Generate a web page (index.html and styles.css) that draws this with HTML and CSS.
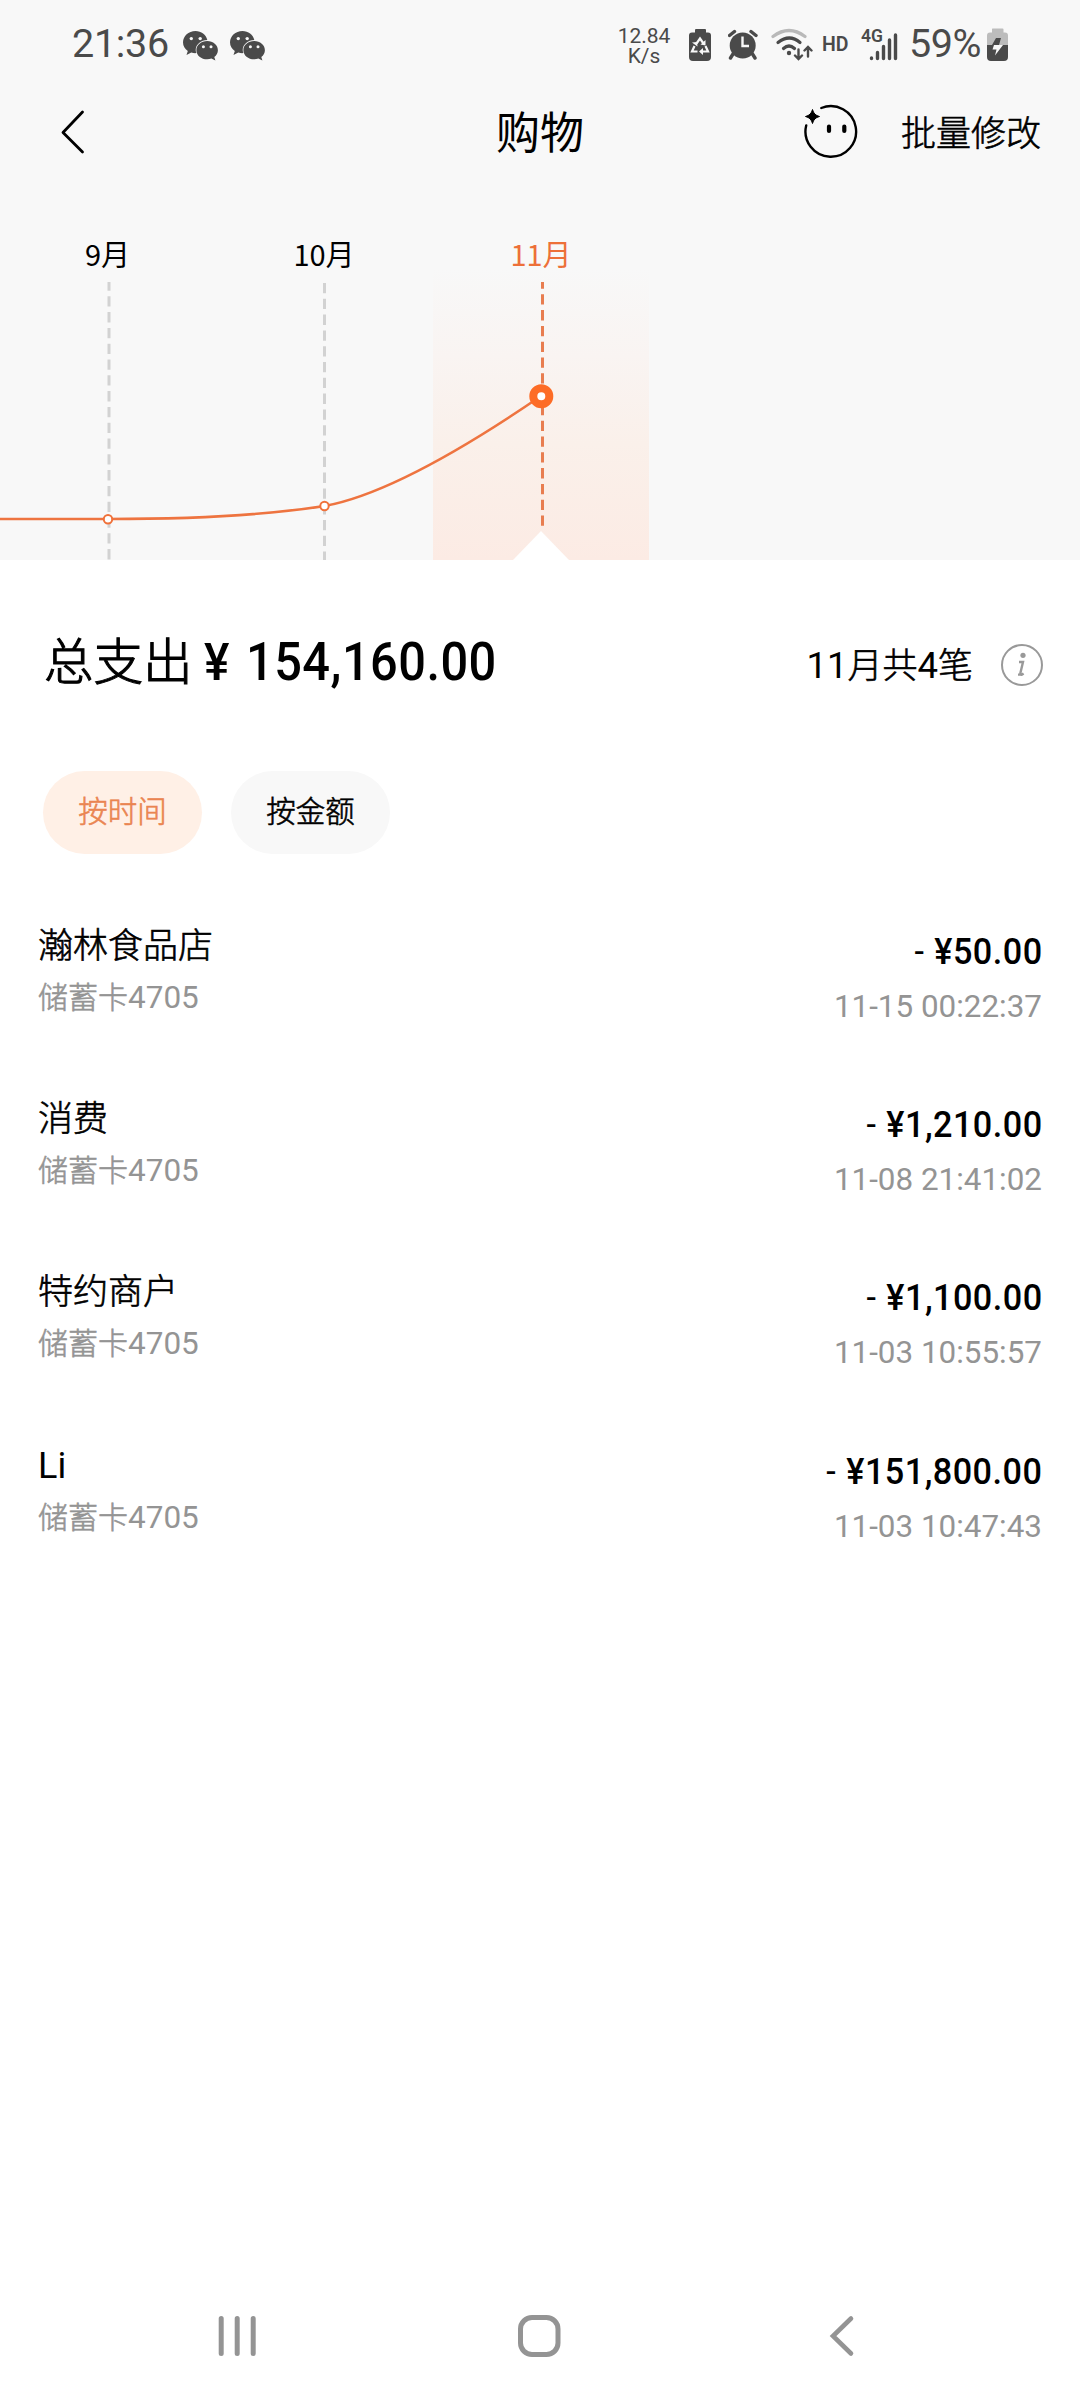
FILE: index.html
```html
<!DOCTYPE html>
<html lang="zh-CN">
<head>
<meta charset="utf-8">
<title>购物</title>
<link rel="stylesheet" href="styles.css">
</head>
<body>
<svg width="0" height="0" class="defs">
  <symbol id="wechat" viewBox="183 28 35 34">
    <path fill="#4a4a4a" d="M195.500 31c-7 0-12.500 5-12.500 11.300 0 3.700 1.900 6.800 4.800 8.800l-1.300 4 4.800-2.500c1.500.4 3.200.6 5 .5a11 11 0 0 1-.6-3.100c0-5.800 5.300-10 11.600-10.100-1.200-5.200-6-8.900-11.800-8.900z"/>
    <path fill="#4a4a4a" d="M207.200 41c-6 0-10.800 4-10.800 9.200s4.800 9.100 10.800 9.100c1.500 0 2.900-.3 4.200-.7l4 2-1.100-3.600c2.200-1.600 3.600-4 3.600-6.800 0-5.200-4.800-9.200-10.700-9.200z"/>
    <circle cx="191.300" cy="38.600" r="1.700" fill="#f8f8f8"/><circle cx="200.200" cy="38.600" r="1.700" fill="#f8f8f8"/>
    <circle cx="203.400" cy="46.800" r="1.500" fill="#f8f8f8"/><circle cx="211" cy="46.800" r="1.500" fill="#f8f8f8"/>
  </symbol>
</svg>
<header class="top">
  <div class="status">
    <span class="clock">21:36</span>
    <svg class="chat" width="35" height="34"><use href="#wechat"/></svg>
    <svg class="chat" width="35" height="34"><use href="#wechat"/></svg>
    <div class="speed"><span>12.84</span><span>K/s</span></div>
    <svg class="i-saver" width="22" height="86" viewBox="689 0 22 86">
      <path fill="#4a4a4a" d="M696 29h9q1 0 1 1v2.500h2q3 0 3 3V57q0 4-4 4h-14q-4 0-4-4V35.500q0-3 3-3h3V30q0-1 1-1z"/>
      <path d="M696.500 43.500l3.500-5 3.500 5M694.500 46l-2.500 5.500h5.500M705.500 46l2.500 5.500h-6" fill="none" stroke="#f8f8f8" stroke-width="2.200"/>
      <path fill="#f8f8f8" d="M705.500 40v5.500l-5-1zM692 42.500l5-.5.500 4.500zM703 48v7l-4-3.500z"/>
    </svg>
    <svg class="i-alarm" width="30" height="86" viewBox="728 0 30 86">
      <path d="M729.500 35.500l5-4M756 35.500l-5-4M733 54l-2.500 4M752.500 54l2.500 4" stroke="#4a4a4a" stroke-width="3.400" stroke-linecap="round"/>
      <circle cx="742.700" cy="45.500" r="13" fill="#4a4a4a"/>
      <path d="M742.500 36.500V46h6.500" fill="none" stroke="#f8f8f8" stroke-width="2.400"/>
    </svg>
    <svg class="i-wifi" width="42" height="86" viewBox="771 0 42 86" fill="none" stroke-linecap="round">
      <path d="M773 36.500q16-12 32 0" stroke="#b9b9b9" stroke-width="3.200"/>
      <path d="M778 42.500q11.500-9 22 0M783.500 48.500q5.500-5 11 0" stroke="#4a4a4a" stroke-width="3.200"/>
      <circle cx="789" cy="53" r="2.200" fill="#4a4a4a"/>
      <path d="M798.500 49.500v9M795 55.500l3.500 3.500 3.500-3.500M808 56.500v-9M804.500 50.500l3.500-3.500 3.500 3.500" stroke="#4a4a4a" stroke-width="2.400"/>
    </svg>
    <span class="hd">HD</span>
    <svg class="i-signal" width="38" height="86" viewBox="860 0 38 86">
      <text x="861" y="42" class="net">4G</text>
      <path d="M871.500 58v.5M877.500 52.500v6M883.500 46.500v12M889.500 40v18.500M895.500 35v23.500" stroke="#4a4a4a" stroke-width="3.400" stroke-linecap="round"/>
    </svg>
    <span class="percent">59%</span>
    <svg class="i-batt" width="22" height="86" viewBox="987 0 22 86">
      <path fill="#bcbcbc" d="M993.500 28.500h9q1 0 1 1v3h1.500q3 0 3 3V46h-21V35.500q0-3 3-3h2v-3q0-1 .5-1z"/>
      <path fill="#4a4a4a" d="M987 45h21v12q0 4-4 4h-13q-4 0-4-4zM996 38h5l-2 7h-7z"/>
      <path fill="#f8f8f8" d="M999.500 45h3.500l-8 10.500 1.500-6h-4l1.500-4.500z"/>
    </svg>
  </div>
  <nav class="bar">
    <svg class="back" width="24" height="44" viewBox="61 110 24 44"><path d="M82.500 112L63 132.500l19.500 19.500" fill="none" stroke="#000" stroke-width="2.800" stroke-linecap="round" stroke-linejoin="round"/></svg>
    <h1 class="title">购物</h1>
    <div class="actions">
      <svg width="56" height="56" viewBox="803 104 56 56">
        <path d="M821.300 108A25.300 25.300 0 1 1 806.200 125.500" fill="none" stroke="#000" stroke-width="2.400" stroke-linecap="round"/>
        <path d="M812.500 109.500q1.300 5.700 7 7-5.700 1.300-7 7-1.300-5.700-7-7 5.700-1.300 7-7z" stroke="#000"/>
        <path d="M829 126.500v4.500M844.300 126.500v4.500" stroke="#000" stroke-width="4.200" stroke-linecap="round"/>
      </svg>
      <span class="soft">批量修改</span>
    </div>
  </nav>
  <svg class="chart" width="1080" height="378" viewBox="0 182 1080 378">
    <defs><linearGradient id="glow" x1="0" y1="0" x2="0" y2="1"><stop offset="0" stop-color="#f8f8f8"/><stop offset=".3" stop-color="#f9f4f2"/><stop offset=".6" stop-color="#faf0ea"/><stop offset="1" stop-color="#fcebe4"/></linearGradient></defs>
    <rect x="433" y="268" width="216" height="292" fill="url(#glow)"/>
    <g class="months"><text x="107.500" y="265.500">9月</text><text x="324" y="265.500">10月</text><text x="541" y="265.500" class="on">11月</text></g>
    <g fill="none" stroke="#d2d2d2" stroke-width="3" stroke-dasharray="10.300 5.500">
      <path d="M109 282V560" stroke-dashoffset="1.500"/>
      <path d="M324.500 283V560"/>
      <path d="M542.500 282V529" stroke="#e87d50" stroke-dashoffset="3.500"/>
    </g>
    <path d="M513 560l28-29 28 29z" fill="#fff"/>
    <path d="M0 519H108C190 519 260 516 324.500 506C385 495 465 448 541 396" fill="none" stroke="#ee7440" stroke-width="2.600"/>
    <circle cx="108" cy="519.300" r="4.200" class="node"/>
    <circle cx="324.500" cy="506" r="4.200" class="node"/>
    <circle cx="541.300" cy="396.200" r="8" fill="#fff" stroke="#fd6c26" stroke-width="8"/>
  </svg>
</header>
<main class="content">
  <section class="summary">
    <div class="total"><span class="label soft">总支出</span><span class="yen">¥</span><span class="sum">154,160.00</span></div>
    <div class="count">
      <span class="num soft"><b>11</b>月共<b>4</b>笔</span>
      <svg width="44" height="44" viewBox="1000 643 44 44" fill="none" stroke="#999"><circle cx="1022" cy="665" r="20" stroke-width="2"/><circle cx="1023" cy="655.300" r="2.600" fill="#999" stroke="none"/><path d="M1019 662h4l-2.600 11q-.5 2.300 1.500 1.600l1.700-1.200M1020.500 674.600h-2.500" stroke-width="2.400"/></svg>
    </div>
  </section>
  <div class="tabs"><button class="tab soft active">按时间</button><button class="tab soft">按金额</button></div>
  <ul class="list">
    <li><div class="left"><p class="name soft">瀚林食品店</p><p class="card soft">储蓄卡<b>4705</b></p></div><div class="right"><p class="amount"><i>-</i><span>¥50.00</span></p><time>11-15 00:22:37</time></div></li>
    <li><div class="left"><p class="name soft">消费</p><p class="card soft">储蓄卡<b>4705</b></p></div><div class="right"><p class="amount"><i>-</i><span>¥1,210.00</span></p><time>11-08 21:41:02</time></div></li>
    <li><div class="left"><p class="name soft">特约商户</p><p class="card soft">储蓄卡<b>4705</b></p></div><div class="right"><p class="amount"><i>-</i><span>¥1,100.00</span></p><time>11-03 10:55:57</time></div></li>
    <li><div class="left"><p class="name latin">Li</p><p class="card soft">储蓄卡<b>4705</b></p></div><div class="right"><p class="amount"><i>-</i><span>¥151,800.00</span></p><time>11-03 10:47:43</time></div></li>
  </ul>
</main>
<footer class="sysnav">
  <svg width="40" height="44" viewBox="217 2314 40 44"><path d="M221.200 2318.500v35M237.200 2318.500v35M253.200 2318.500v35" stroke="#949494" stroke-width="5" stroke-linecap="round"/></svg>
  <svg width="44" height="44" viewBox="517 2314 44 44"><rect x="520.500" y="2317.500" width="37.500" height="37" rx="11.500" fill="none" stroke="#949494" stroke-width="5"/></svg>
  <svg width="26" height="44" viewBox="829 2314 26 44"><path d="M851 2318.500L833 2336l18 17.500" fill="none" stroke="#949494" stroke-width="4.600" stroke-linecap="round"/></svg>
</footer>
</body>
</html>
```
FILE: styles.css
```css
* { box-sizing: border-box; margin: 0; padding: 0; }
body {
  width: 1080px;
  height: 2400px;
  display: flex;
  flex-direction: column;
  overflow: hidden;
  background: #fff;
  color: #000;
  font-family: Roboto, "Noto Sans CJK SC", sans-serif;
}
svg { display: block; flex: none; }
.defs { position: absolute; }
b, i { font-weight: 400; font-style: normal; }
/* a weight between light and regular for Chinese text */
.soft { font-weight: 300; -webkit-text-stroke: .6px currentColor; }
.soft b { -webkit-text-stroke: 0; }

.top { background: #f8f8f8; height: 560px; }
.status { display: flex; align-items: center; height: 86px; padding-left: 72px; color: #4a4a4a; white-space: nowrap; }
.clock { width: 111px; margin-top: 2px; font-size: 39.5px; line-height: 86px; letter-spacing: -.3px; }
.chat { margin: 4px 12px 0 0; }
.speed { display: flex; flex-direction: column; align-items: center; width: 54px; margin: 5px 0 0 340px; font-size: 21px; line-height: 20px; }
.i-saver { margin-left: 18px; }
.i-alarm { margin-left: 17px; }
.i-wifi { margin-left: 13px; }
.hd { width: 26px; margin: 3px 0 0 9px; font-size: 19.500px; font-weight: 600; line-height: 86px; }
.i-signal { margin-left: 12px; }
.net { font: 600 17.500px Roboto, sans-serif; fill: #4a4a4a; }
.percent { width: 72px; margin: 2px 0 0 11px; font-size: 39.5px; line-height: 86px; letter-spacing: -.5px; }
.i-batt { margin-left: 6px; }

.bar { display: grid; grid-template-columns: 1fr auto 1fr; align-items: center; height: 96px; padding: 0 39px 0 61px; }
.back { margin-top: -4px; }
.title { font-size: 44px; font-weight: 400; line-height: 60px; padding-right: 22px; }
.actions { display: flex; align-items: center; justify-content: flex-end; gap: 42px; font-size: 35px; line-height: 60px; white-space: nowrap; }
.actions span { padding-top: 2px; }
.actions svg { margin-top: -4px; }

.months { font: 29px "Noto Sans CJK SC", sans-serif; text-anchor: middle; }
.months .on { fill: #ed7039; }
.node { fill: #fff; stroke: #f0713a; stroke-width: 2; }

.content { flex: 1; padding-top: 62px; }
.summary { display: flex; justify-content: space-between; height: 149px; padding: 0 36px 0 44px; }
.total { display: flex; align-items: baseline; height: 81px; line-height: 80px; white-space: nowrap; }
.label { font-size: 49.5px; -webkit-text-stroke-width: 1.1px; }
.yen { margin-left: 11px; font-size: 52px; font-weight: 500; transform: scaleX(.92); transform-origin: left; }
.sum { margin-left: 15px; font-size: 53px; font-weight: 500; letter-spacing: .5px; transform: scaleX(.92); transform-origin: left; }
.count { display: flex; align-items: center; gap: 27px; height: 86px; font-size: 35px; white-space: nowrap; }
.num { padding-bottom: 6px; }
.count b { font-size: 36.5px; }

.tabs { display: flex; gap: 29px; padding-left: 43px; }
.tab { width: 159px; height: 83px; padding-bottom: 2px; border: 0; border-radius: 42px; background: #f8f8f8; color: #000; font: 300 29.500px/80px Roboto, "Noto Sans CJK SC", sans-serif; }
.tab.active { background: #fff0e6; color: #ea8551; }

.list { margin-top: 68px; list-style: none; }
.list li { display: flex; justify-content: space-between; height: 173.200px; padding: 0 38px; }
.name { font-size: 35px; line-height: 50px; }
.name.latin { margin-top: -1px; font-size: 36px; }
.name.latin + .card { margin-top: 7px; }
.card { margin-top: 6px; font-size: 30px; line-height: 40px; color: #949494; }
.card b { font-size: 31.5px; }
.right { padding-top: 5px; text-align: right; }
.amount { display: flex; justify-content: flex-end; gap: 11px; font-size: 36px; line-height: 50px; transform: scaleX(.95); transform-origin: right; }
.amount span { font-weight: 500; letter-spacing: .5px; margin-right: -.5px; }
time { display: block; margin-top: 10px; font-size: 31.4px; line-height: 40px; color: #949494; }

.sysnav { display: flex; height: 108px; padding: 22px 0 0 217px; }
.sysnav svg + svg { margin-left: 260px; }
.sysnav svg:last-child { margin-left: 268px; }
```
